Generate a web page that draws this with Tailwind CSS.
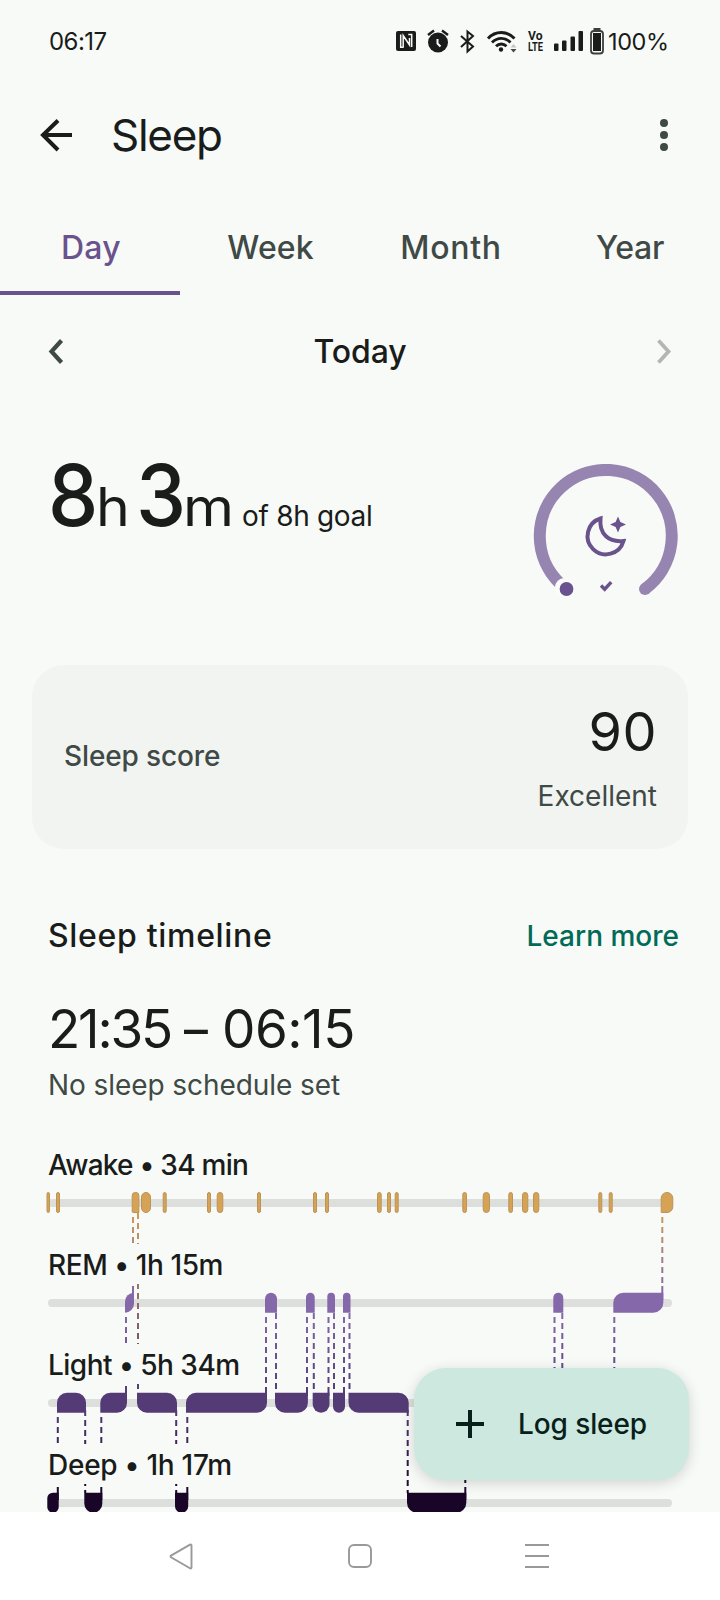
<!DOCTYPE html>
<html lang="en">
<head>
<meta charset="utf-8">
<title>Sleep</title>
<script src="https://cdn.jsdelivr.net/npm/@tailwindcss/browser@4"></script>
</head>
<body class="bg-white">
<div class="relative flex h-[1600px] w-[720px] flex-col overflow-hidden bg-[#f8faf7] font-['Inter',sans-serif] text-[#191c1a]">

  <!-- Status bar -->
  <div class="flex h-[83px] shrink-0 justify-between pr-[50px] pl-[49px]">
    <span class="text-[24px] leading-[84px] tracking-[-0.55px]">06:17</span>
    <div class="flex">
      <svg class="h-[82px] w-[216px]" viewBox="392 0 216 82" fill="none" stroke="#191c1a">
        <rect x="396" y="31" width="20" height="20" rx="2" fill="#191c1a" stroke="none"/>
        <path d="M403.200 47.500V35.500l6.300 9.500V38M400.700 34.500v12.700h2.800M408.300 34.500h3.400v12.500" stroke="#f8faf7" stroke-width="1.500"/>
        <circle cx="438" cy="42.500" r="10" fill="#191c1a" stroke="none"/>
        <path d="M428 35l6-4.500M448 35l-6-4.500" stroke-width="2.400"/>
        <path d="M437.500 39v4.500l3 3" stroke="#f8faf7" stroke-width="2"/>
        <path d="M461 36l12 10.500-5.500 5V31.500l5.500 4.500L461 47" stroke-width="2"/>
        <path d="M488 38.500c7.500-8 19-8 26.500 0M492 42.500c5.500-5.500 13-5.500 18.500 0M496 46.300c3-3 7.500-3 10.500 0" stroke-width="2.900"/>
        <circle cx="501" cy="49.500" r="2.200" fill="#191c1a" stroke="none"/>
        <path d="M510.500 47.500h6l-3-3.500z" fill="#c4c6c3" stroke="none"/>
        <path d="M510.500 49h6l-3 3.500z" fill="#444744" stroke="none"/>
        <g fill="#191c1a" stroke="none" font-family="Roboto, sans-serif" font-weight="700">
          <text x="528" y="40" font-size="12.500" textLength="14.500" lengthAdjust="spacingAndGlyphs">Vo</text>
          <text x="528" y="51" font-size="12.500" textLength="15" lengthAdjust="spacingAndGlyphs">LTE</text>
        </g>
        <g fill="#191c1a" stroke="none">
          <rect x="554" y="43.500" width="4.500" height="7.500" rx="1"/>
          <rect x="562" y="40.500" width="4.500" height="10.500" rx="1"/>
          <rect x="570.500" y="36.500" width="4.500" height="14.500" rx="1"/>
          <rect x="578.500" y="31" width="4.500" height="20" rx="1"/>
        </g>
        <rect x="591" y="31" width="12" height="22.500" rx="3" stroke="#3c3f3c" stroke-width="1.800"/>
        <rect x="593" y="33" width="8" height="18" fill="#191c1a" stroke="none"/>
        <path d="M593.500 29h7" stroke="#3c3f3c" stroke-width="2"/>
      </svg>
      <span class="w-[62px] text-[23.500px] leading-[84px] tracking-[-0.400px] whitespace-nowrap">100%</span>
    </div>
  </div>

  <!-- App bar -->
  <div class="flex h-[103px] shrink-0 items-center pr-[52px] pl-[38px]">
    <svg class="h-[36px] w-[36px]" viewBox="38 117 36 36" fill="none" stroke="#191c1a" stroke-width="4"><path d="M58 120.500L43 135l15 15M42.500 135H72"/></svg>
    <h1 class="ml-[37px] text-[44px] leading-[60px] tracking-[-1.300px]">Sleep</h1>
    <div class="ml-auto flex flex-col gap-[4px] pt-px">
      <i class="size-[8px] rounded-full bg-[#3f4945]"></i><i class="size-[8px] rounded-full bg-[#3f4945]"></i><i class="size-[8px] rounded-full bg-[#3f4945]"></i>
    </div>
  </div>

  <!-- Period tabs -->
  <div class="flex h-[109px] shrink-0 text-center text-[32px] leading-[40px] font-medium text-[#3f4945]">
    <div class="w-[180px] border-b-4 border-[#6a538c] pt-[42px] pl-[2px] tracking-[0.300px] text-[#6a538c]">Day</div>
    <div class="w-[180px] pt-[42px] pl-px tracking-[0.100px]">Week</div>
    <div class="w-[180px] pt-[42px] pl-[2px] tracking-[0.700px]">Month</div>
    <div class="w-[180px] pt-[42px] tracking-[-0.300px]">Year</div>
  </div>

  <!-- Date picker -->
  <div class="flex h-[112px] shrink-0 items-center justify-between px-[48px]">
    <svg class="h-[28px] w-[16px]" viewBox="0 0 16 28" fill="none" stroke="#3f4945" stroke-width="4.200"><path d="M13.500 3.500L3.500 14.500l10 11"/></svg>
    <span class="pt-[2px] text-[32px] leading-[40px] font-medium tracking-[-0.150px]">Today</span>
    <svg class="h-[28px] w-[16px]" viewBox="0 0 16 28" fill="none" stroke="#b3b7b3" stroke-width="3.800"><path d="M2.500 3.500l10 11-10 11"/></svg>
  </div>

  <!-- Duration and goal ring -->
  <div class="flex h-[258px] shrink-0 justify-between pr-[41px] pl-[48px]">
    <div class="flex h-[100px] items-baseline pt-[39px] leading-[100px] whitespace-nowrap">
      <span class="w-[48px] origin-left scale-x-[0.940] text-[85px] font-[450]">8</span>
      <span class="w-[40px] origin-left scale-x-[1.080] text-[53px]">h</span>
      <span class="w-[47px] origin-left scale-x-[0.940] text-[85px] font-[450]">3</span>
      <span class="w-[59px] origin-left scale-x-[1.100] text-[53px]">m</span>
      <span class="text-[28px] tracking-[-0.300px]">of 8h goal</span>
    </div>
    <svg class="mt-[57px] h-[146px] w-[146px]" viewBox="533 463.500 146 146" fill="none">
      <path d="M645 588.500A66 66 0 1 0 560 583" stroke="#9785b1" stroke-width="12"/>
      <circle cx="645" cy="588.500" r="6" fill="#9785b1"/>
      <circle cx="564.500" cy="587" r="9.500" fill="#fbfcfa"/>
      <circle cx="566.500" cy="588.500" r="6.900" fill="#6a518f"/>
      <path d="M600.500 518A18.300 18.300 0 1 0 623.500 540.500C609 542 599 534 600.500 518Z" stroke="#6a538c" stroke-width="4"/>
      <path d="M618 516l2.400 5.600 5.600 2.400-5.600 2.400-2.400 5.600-2.400-5.600-5.600-2.400 5.600-2.400z" fill="#6a538c"/>
      <path d="M601 585l3.700 3.700 6.500-7" stroke="#6a538c" stroke-width="3.400"/>
    </svg>
  </div>

  <!-- Score card -->
  <div class="mx-[32px] flex h-[184px] shrink-0 items-center justify-between rounded-[32px] bg-[#f1f4f1] pr-[31px] pl-[32px]">
    <span class="pb-[2px] text-[28px] leading-[40px] font-medium tracking-[-0.130px] text-[#3f4945]">Sleep score</span>
    <div class="flex flex-col items-end pt-[14px]">
      <span class="text-[54px] leading-[64px] tracking-[0.500px]">90</span>
      <span class="text-[28px] leading-[64px] text-[#3f4945]">Excellent</span>
    </div>
  </div>

  <!-- Timeline heading -->
  <div class="mt-[40px] flex h-[94px] shrink-0 items-center justify-between pr-[41px] pl-[48px] font-medium">
    <h2 class="text-[32px] tracking-[0.680px]">Sleep timeline</h2>
    <a class="text-[28px] text-[#006b57]">Learn more</a>
  </div>
  <div class="mt-[14px] shrink-0 pl-[48px]">
    <div class="flex text-[53px] leading-[64px]">
      <span class="w-[132px] tracking-[-2.200px]">21:35</span>
      <span class="ml-[4px] w-[38px] origin-left scale-x-[0.900]">–</span>
      <span class="tracking-[-0.500px]">06:15</span>
    </div>
    <div class="text-[28px] leading-[48px] tracking-[-0.070px] text-[#3f4945]">No sleep schedule set</div>
  </div>

  <!-- Sleep stages chart -->
  <div class="relative mt-[35px] h-[368px] shrink-0 overflow-hidden">
    <svg id="chart" class="absolute inset-0 h-[368px] w-[720px]" viewBox="0 1144 720 368">
      <defs>
        <linearGradient id="awakeRem" gradientUnits="userSpaceOnUse" x1="0" y1="1213" x2="0" y2="1293"><stop stop-color="#cf9c59"/><stop offset="1" stop-color="#8568a9"/></linearGradient>
        <linearGradient id="awakeLight" gradientUnits="userSpaceOnUse" x1="0" y1="1213" x2="0" y2="1393"><stop stop-color="#cf9c59"/><stop offset="1" stop-color="#543b76"/></linearGradient>
        <linearGradient id="remLight" gradientUnits="userSpaceOnUse" x1="0" y1="1313" x2="0" y2="1393"><stop stop-color="#8568a9"/><stop offset="1" stop-color="#543b76"/></linearGradient>
        <linearGradient id="lightDeep" gradientUnits="userSpaceOnUse" x1="0" y1="1413" x2="0" y2="1493"><stop stop-color="#543b76"/><stop offset="1" stop-color="#180527"/></linearGradient>
      </defs>
    </svg>
    <div class="relative pl-[48px] text-[28px] leading-[42px] font-medium">
      <div class="mb-[60px] h-[40px] w-fit bg-[#f8faf7] tracking-[-0.750px]">Awake • 34 min</div>
      <div class="mb-[60px] h-[40px] w-fit bg-[#f8faf7] tracking-[-0.430px]">REM • 1h 15m</div>
      <div class="mb-[60px] h-[40px] w-fit bg-[#f8faf7] tracking-[-0.520px]">Light • 5h 34m</div>
      <div class="h-[40px] w-fit bg-[#f8faf7] tracking-[-0.260px]">Deep • 1h 17m</div>
    </div>
  </div>

  <!-- Navigation bar -->
  <div class="relative flex h-[88px] shrink-0 items-center bg-white pl-[168px]">
    <svg class="h-[30px] w-[384px]" viewBox="168 1541 384 30" fill="none" stroke="#999" stroke-width="1.900">
      <path d="M191.500 1545.500v22a1 1 0 0 1-1.500.8l-19-11a1 1 0 0 1 0-1.700l19-11a1 1 0 0 1 1.500.9z"/>
      <rect x="349" y="1545" width="22" height="22" rx="5"/>
      <path d="M525 1545h24M525 1556h24M525 1567h24"/>
    </svg>
  </div>

  <!-- Floating action button -->
  <button class="absolute top-[1368px] left-[414px] flex h-[112px] w-[275px] items-center rounded-[32px] bg-[#cde8df] pl-[42px] text-[28px] font-medium tracking-[-0.100px] text-[#07201a] shadow-[0_3px_14px_rgba(0,0,0,0.16)]">
    <svg class="size-[28px]" viewBox="0 0 28 28" fill="none" stroke="#07201a" stroke-width="4"><path d="M14 0v28M0 14h28"/></svg>
    <span class="ml-[34px]">Log sleep</span>
  </button>
</div>

<script>
const svg = document.getElementById('chart');
const add = (tag, attrs) => {
  const el = document.createElementNS('http://www.w3.org/2000/svg', tag);
  for (const k in attrs) el.setAttribute(k, attrs[k]);
  svg.append(el);
};

// Tracks
for (const y of [1199, 1299, 1399, 1499]) add('rect', { x: 48, y, width: 624, height: 8, rx: 4, fill: '#dcdfdb' });

// Transitions: [x, y1, y2, gradient, dash offset, solid]
const lines = [
  [133, 1213, 1286, 'awakeRem', 6], [133, 1286, 1300, 'awakeRem', 0, 1],
  [138, 1213, 1393, 'awakeLight', 0], [662.3, 1213, 1286, 'awakeRem', 6], [662.3, 1286, 1300, 'awakeRem', 0, 1],
  [126, 1313, 1386, 'remLight', 6], [126, 1386, 1400, 'remLight', 0, 1],
  ...[266, 307, 328.5, 344, 554.5, 614.3].flatMap(x => [[x, 1313, 1386, 'remLight', 6], [x, 1387, 1396, 'remLight', 0, 1]]),
  ...[276, 313.8, 334, 349.5, 562.3].map(x => [x, 1313, 1393, 'remLight', 0]),
  ...[57.8, 101.3, 187.3, 465.3].flatMap(x => [[x, 1413, 1486, 'lightDeep', 6], [x, 1487, 1500, 'lightDeep', 0, 1]]),
  ...[85.2, 176.2, 407.7].map(x => [x, 1408, 1493, 'lightDeep', -2]),
];
for (const [x, y1, y2, g, off, solid] of lines) {
  const a = { x1: x, y1, x2: x, y2, stroke: `url(#${g})`, 'stroke-width': 2 };
  if (!solid) { a['stroke-dasharray'] = '6 4'; a['stroke-dashoffset'] = off; }
  add('line', a);
}

// Bars: corners are [top-left, top-right, bottom-right, bottom-left]
const bar = (x0, x1, y, h, fill, [a, b, c, d], stroke) => add('path', {
  d: `M${x0 + a} ${y}H${x1 - b}a${b} ${b} 0 0 1 ${b} ${b}V${y + h - c}a${c} ${c} 0 0 1 ${-c} ${c}H${x0 + d}a${d} ${d} 0 0 1 ${-d} ${-d}V${y + a}a${a} ${a} 0 0 1 ${a} ${-a}Z`,
  fill, ...(stroke ? { stroke, 'stroke-width': 1 } : {}),
});
const awake = [[46.5, 50], [56, 60], [162.7, 166.7], [207, 211], [216.7, 223.3], [257, 261], [313, 317], [325, 329],
  [377, 381.7], [387, 391], [394.7, 398.7], [462.3, 467], [482.7, 490], [508.3, 513], [522, 528.3], [533, 539.3], [598.3, 602.3], [608.7, 612.7], [141, 151]];
for (const [a, b] of awake) { const r = Math.min(4.5, (b - a) / 2 - 0.5); bar(a + .5, b - .5, 1192.5, 20, '#d5a256', [r, r, r, r], '#bd9458'); }
bar(132.2, 138.9, 1192.5, 20, '#d5a256', [3, 3, 0, 1], '#bd9458');
bar(661.2, 672.8, 1192.5, 20, '#d5a256', [5.8, 5.8, 5.8, 0], '#bd9458');

const rem = '#8568a9';
bar(125, 134, 1292.7, 20, rem, [9, 0, 9, 0]);
for (const [a, b] of [[265, 277], [306, 314.7], [327.3, 335], [343, 350.5], [553.3, 563.3]]) bar(a, b, 1292.7, 20, rem, [(b - a) / 2, (b - a) / 2, 0, 0]);
bar(613.3, 663.3, 1292.7, 20, rem, [10, 0, 10, 0]);

const light = '#543b76';
bar(57, 86, 1392.7, 20, light, [10, 10, 0, 0]);
bar(100.3, 127, 1392.7, 20, light, [10, 0, 10, 0]);
bar(137, 177, 1392.7, 20, light, [0, 10, 0, 10]);
bar(186, 267, 1392.7, 20, light, [10, 0, 10, 0]);
bar(275, 307.9, 1392.7, 20, light, [0, 0, 10, 10]);
bar(312.7, 329.5, 1392.7, 20, light, [0, 0, 8.4, 8.4]);
bar(333, 345, 1392.7, 20, light, [0, 0, 6, 6]);
bar(348.5, 408.7, 1392.7, 20, light, [0, 10, 0, 10]);

const deep = '#180527';
bar(47.3, 58.7, 1492.7, 20, deep, [5.5, 0, 5.5, 5.5]);
bar(84.3, 102.3, 1492.7, 20, deep, [0, 0, 9, 9]);
bar(175, 188.2, 1492.7, 20, deep, [0, 0, 6.5, 6.5]);
bar(407, 466.3, 1492.7, 20, deep, [0, 0, 10, 10]);
</script>
</body>
</html>
